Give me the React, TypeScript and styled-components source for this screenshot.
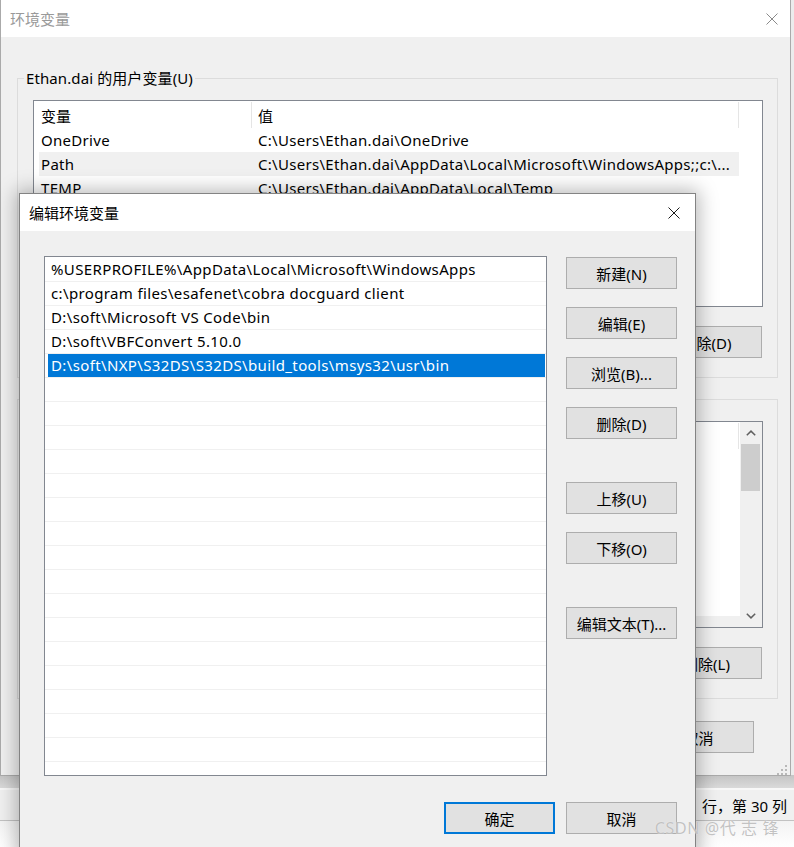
import React from "react";
import styled, { createGlobalStyle, css } from "styled-components";

const UI = `"Noto Sans", "Noto Sans CJK SC", sans-serif`;

const Global = createGlobalStyle`
  html, body { margin: 0; padding: 0; background: #ffffff; }
  body { font-family: ${UI}; font-size: 15px; color: #000; }
  * { box-sizing: border-box; }
`;

const Desktop = styled.div`
  position: relative;
  width: 794px;
  height: 847px;
  overflow: hidden;
  background: #e9e9e9;
`;

/* ---------- underlying editor application ---------- */
const EditorApp = styled.div`
  display: flex;
  flex-direction: column;
  height: 100%;
`;
const EditorCanvas = styled.div`
  height: 775px;
  background: #ececec;
`;
const EditorBand = styled.div`
  height: 15px;
  background: linear-gradient(#c4c4c4, #dadada);
  border-bottom: 2px solid #f8f8f8;
`;
const StatusBar = styled.div`
  height: 31px;
  background: #f0f0f0;
  border-bottom: 1px solid #c2c2c2;
  display: flex;
  align-items: center;
  justify-content: flex-end;
  padding-right: 7px;
  font-size: 15px;
  white-space: nowrap;
`;
const EditorBottom = styled.div`
  flex: 1;
  background: linear-gradient(#f3f3f3, #ffffff);
`;

/* ---------- windows ---------- */
const Window = styled.div<{ $x: number; $y: number; $w: number; $h: number; $active?: boolean }>`
  position: absolute;
  left: ${(p) => p.$x}px;
  top: ${(p) => p.$y}px;
  width: ${(p) => p.$w}px;
  height: ${(p) => p.$h}px;
  display: flex;
  flex-direction: column;
  background: #f0f0f0;
  border: 1px solid ${(p) => (p.$active ? "#838383" : "#aaaaaa")};
  ${(p) =>
    p.$active &&
    css`
      box-shadow: 0 0 18px 3px rgba(0, 0, 0, 0.28);
    `}
`;

const TitleBar = styled.div`
  height: 37px;
  flex: none;
  background: #ffffff;
  display: flex;
  align-items: center;
  padding-left: 9px;
`;

const TitleText = styled.div<{ $active?: boolean }>`
  font-size: 15px;
  color: ${(p) => (p.$active ? "#000000" : "#9a9a9a")};
  white-space: nowrap;
`;

const CloseButton = styled.div<{ $w: number }>`
  margin-left: auto;
  width: ${(p) => p.$w}px;
  height: 100%;
  display: flex;
  align-items: center;
  justify-content: center;
`;

const XIcon = ({ color }: { color: string }) => (
  <svg width="12" height="12" viewBox="0 0 12 12">
    <path d="M0.5 0.5 L11.5 11.5 M11.5 0.5 L0.5 11.5" stroke={color} strokeWidth="1" fill="none" />
  </svg>
);

/* ---------- background dialog (环境变量) ---------- */
const BgBody = styled.div`
  flex: 1;
  display: flex;
  flex-direction: column;
  padding: 41px 12px 0 16px;
  position: relative;
`;

const GroupBox = styled.div<{ $mt?: number }>`
  position: relative;
  margin-top: ${(p) => p.$mt ?? 0}px;
  border: 1px solid #dcdcdc;
  padding: 21px 14px 19px 15px;
  display: flex;
  flex-direction: column;
`;

const GroupLabel = styled.div`
  position: absolute;
  top: -11px;
  left: 6px;
  padding: 0 2px;
  line-height: 20px;
  background: #f0f0f0;
  white-space: nowrap;
  letter-spacing: 0.1px;
`;

const ListView = styled.div`
  height: 207px;
  border: 1px solid #828790;
  background: #ffffff;
  display: flex;
  overflow: hidden;
`;

const ListMain = styled.div`
  flex: 1;
  display: flex;
  flex-direction: column;
  min-width: 0;
`;

const ListHeader = styled.div`
  height: 27px;
  flex: none;
  display: grid;
  grid-template-columns: 218px 487px 1fr;
`;

const HeaderCell = styled.div<{ $pl: number; $divider?: boolean }>`
  padding-left: ${(p) => p.$pl}px;
  margin-top: 1px;
  display: flex;
  align-items: center;
  border-right: ${(p) => (p.$divider ? "1px solid #e5e5e5" : "none")};
  white-space: nowrap;
`;

const ListRows = styled.div`
  flex: 1;
  overflow: hidden;
`;

const VarRow = styled.div<{ $hl?: boolean }>`
  height: 24px;
  margin-left: 5px;
  width: 700px;
  display: grid;
  grid-template-columns: 213px 487px;
  align-items: center;
  background: ${(p) => (p.$hl ? "#f0f0f0" : "transparent")};
`;

const VarCell = styled.div<{ $pl: number }>`
  padding-left: ${(p) => p.$pl}px;
  white-space: nowrap;
  overflow: hidden;
  text-overflow: ellipsis;
  letter-spacing: 0.3px;
`;

const HScroll = styled.div`
  height: 11px;
  flex: none;
  background: #f0f0f0;
`;

const VScroll = styled.div`
  width: 22px;
  flex: none;
  background: #f0f0f0;
  display: flex;
  flex-direction: column;
`;

const ScrollArrow = styled.div`
  height: 22px;
  flex: none;
  display: flex;
  align-items: center;
  justify-content: center;
`;

const ScrollThumb = styled.div`
  height: 47px;
  margin: 0 2px 0 1px;
  background: #cdcdcd;
`;

const ScrollSpacer = styled.div`
  flex: 1;
`;

const Chevron = ({ up }: { up?: boolean }) => (
  <svg width="10" height="6" viewBox="0 0 10 6">
    <polyline
      points={up ? "0.8,5.3 5,1.1 9.2,5.3" : "0.8,0.7 5,4.9 9.2,0.7"}
      stroke="#606060"
      strokeWidth="1.5"
      fill="none"
    />
  </svg>
);

const ButtonRow = styled.div<{ $mt: number; $pr?: number; $gap?: number }>`
  display: flex;
  justify-content: flex-end;
  gap: ${(p) => p.$gap ?? 11}px;
  margin-top: ${(p) => p.$mt}px;
  padding-right: ${(p) => p.$pr ?? 0}px;
`;

const WinButton = styled.div<{ $default?: boolean; $mt?: number }>`
  width: 111px;
  height: 32px;
  flex: none;
  margin-top: ${(p) => p.$mt ?? 0}px;
  background: #e1e1e1;
  border: ${(p) => (p.$default ? "2px solid #0078d7" : "1px solid #adadad")};
  display: flex;
  align-items: center;
  justify-content: center;
  font-size: 15px;
  white-space: nowrap;
`;

const ResizeGrip = styled.div`
  position: absolute;
  right: 1px;
  bottom: 2px;
  width: 12px;
  height: 12px;
`;

/* ---------- foreground dialog (编辑环境变量) ---------- */
const DialogBody = styled.div`
  flex: 1;
  display: flex;
  flex-direction: column;
  padding: 25px 18px 0 24px;
`;

const DialogMain = styled.div`
  display: flex;
  gap: 19px;
`;

const PathList = styled.div`
  width: 503px;
  height: 520px;
  border: 1px solid #828790;
  background: #ffffff;
  padding-top: 1px;
  overflow: hidden;
`;

const PathItem = styled.div`
  height: 24px;
  border-bottom: 1px solid #f0f0f0;
  padding: 0 1px 0 3px;
  display: flex;
`;

const PathText = styled.div<{ $selected?: boolean }>`
  flex: 1;
  line-height: 23px;
  padding-left: 3px;
  white-space: nowrap;
  overflow: hidden;
  letter-spacing: 0.37px;
  background: ${(p) => (p.$selected ? "#0078d7" : "transparent")};
  color: ${(p) => (p.$selected ? "#ffffff" : "#000000")};
`;

const ButtonColumn = styled.div`
  width: 111px;
  display: flex;
  flex-direction: column;
  padding-top: 1px;
`;

const Watermark = styled.div`
  position: absolute;
  right: 15px;
  bottom: 8px;
  font-family: "Noto Sans", "Noto Sans CJK SC", sans-serif;
  font-size: 16px;
  letter-spacing: 0.6px;
  color: rgba(175, 175, 175, 0.75);
  text-shadow: 0 0 1px rgba(255, 255, 255, 0.9);
  white-space: nowrap;
`;

const userVars: [string, string][] = [
  ["OneDrive", "C:\\Users\\Ethan.dai\\OneDrive"],
  ["Path", "C:\\Users\\Ethan.dai\\AppData\\Local\\Microsoft\\WindowsApps;;c:\\..."],
  ["TEMP", "C:\\Users\\Ethan.dai\\AppData\\Local\\Temp"],
  ["TMP", "C:\\Users\\Ethan.dai\\AppData\\Local\\Temp"],
];

const sysVars: [string, string][] = [
  ["ComSpec", "C:\\WINDOWS\\system32\\cmd.exe"],
  ["DriverData", "C:\\Windows\\System32\\Drivers\\DriverData"],
  ["NUMBER_OF_PROCESSORS", "8"],
  ["OS", "Windows_NT"],
  ["PATHEXT", ".COM;.EXE;.BAT;.CMD;.VBS;.VBE;.JS;.JSE;.WSF"],
  ["PROCESSOR_ARCHITECTURE", "AMD64"],
  ["PROCESSOR_LEVEL", "6"],
];

const pathItems: string[] = [
  "%USERPROFILE%\\AppData\\Local\\Microsoft\\WindowsApps",
  "c:\\program files\\esafenet\\cobra docguard client",
  "D:\\soft\\Microsoft VS Code\\bin",
  "D:\\soft\\VBFConvert 5.10.0",
  "D:\\soft\\NXP\\S32DS\\S32DS\\build_tools\\msys32\\usr\\bin",
];

const SELECTED = 4;
const TOTAL_ROWS = 22;

export default function App() {
  const rows = Array.from({ length: TOTAL_ROWS }, (_, i) => pathItems[i] ?? "");

  return (
    <>
      <Global />
      <Desktop>
        <EditorApp>
          <EditorCanvas />
          <EditorBand />
          <StatusBar>第 1 行，第 30 列</StatusBar>
          <EditorBottom />
        </EditorApp>

        <Window $x={0} $y={-1} $w={791} $h={777}>
          <TitleBar>
            <TitleText>环境变量</TitleText>
            <CloseButton $w={36}>
              <XIcon color="#8a8a8a" />
            </CloseButton>
          </TitleBar>
          <BgBody>
            <GroupBox>
              <GroupLabel>Ethan.dai 的用户变量(U)</GroupLabel>
              <ListView>
                <ListMain>
                  <ListHeader>
                    <HeaderCell $pl={7} $divider>变量</HeaderCell>
                    <HeaderCell $pl={6} $divider>值</HeaderCell>
                    <HeaderCell $pl={0} />
                  </ListHeader>
                  <ListRows>
                    {userVars.map(([k, v]) => (
                      <VarRow key={k} $hl={k === "Path"}>
                        <VarCell $pl={2}>{k}</VarCell>
                        <VarCell $pl={6}>{v}</VarCell>
                      </VarRow>
                    ))}
                  </ListRows>
                </ListMain>
              </ListView>
              <ButtonRow $mt={19} $pr={1}>
                <WinButton>新建(N)...</WinButton>
                <WinButton>编辑(E)...</WinButton>
                <WinButton>删除(D)</WinButton>
              </ButtonRow>
            </GroupBox>

            <GroupBox $mt={21}>
              <GroupLabel>系统变量(S)</GroupLabel>
              <ListView>
                <ListMain>
                  <ListHeader>
                    <HeaderCell $pl={7} $divider>变量</HeaderCell>
                    <HeaderCell $pl={6} $divider>值</HeaderCell>
                  </ListHeader>
                  <ListRows>
                    {sysVars.map(([k, v]) => (
                      <VarRow key={k}>
                        <VarCell $pl={2}>{k}</VarCell>
                        <VarCell $pl={6}>{v}</VarCell>
                      </VarRow>
                    ))}
                  </ListRows>
                  <HScroll />
                </ListMain>
                <VScroll>
                  <ScrollArrow>
                    <Chevron up />
                  </ScrollArrow>
                  <ScrollThumb />
                  <ScrollSpacer />
                  <ScrollArrow>
                    <Chevron />
                  </ScrollArrow>
                </VScroll>
              </ListView>
              <ButtonRow $mt={19} $pr={1}>
                <WinButton>新建(W)...</WinButton>
                <WinButton>编辑(I)...</WinButton>
                <WinButton>删除(L)</WinButton>
              </ButtonRow>
            </GroupBox>

            <ButtonRow $mt={22} $pr={24}>
              <WinButton>确定</WinButton>
              <WinButton>取消</WinButton>
            </ButtonRow>

            <ResizeGrip>
              <svg width="12" height="12" viewBox="0 0 12 12">
                {[
                  [8, 0],
                  [4, 4],
                  [8, 4],
                  [0, 8],
                  [4, 8],
                  [8, 8],
                ].map(([x, y]) => (
                  <rect key={`${x}-${y}`} x={x} y={y} width="2" height="2" fill="#b8b8b8" />
                ))}
              </svg>
            </ResizeGrip>
          </BgBody>
        </Window>

        <Window $x={19} $y={193} $w={677} $h={670} $active>
          <TitleBar>
            <TitleText $active>编辑环境变量</TitleText>
            <CloseButton $w={42}>
              <XIcon color="#1a1a1a" />
            </CloseButton>
          </TitleBar>
          <DialogBody>
            <DialogMain>
              <PathList>
                {rows.map((t, i) => (
                  <PathItem key={i}>
                    <PathText $selected={i === SELECTED}>{t}</PathText>
                  </PathItem>
                ))}
              </PathList>
              <ButtonColumn>
                <WinButton>新建(N)</WinButton>
                <WinButton $mt={18}>编辑(E)</WinButton>
                <WinButton $mt={18}>浏览(B)...</WinButton>
                <WinButton $mt={18}>删除(D)</WinButton>
                <WinButton $mt={43}>上移(U)</WinButton>
                <WinButton $mt={18}>下移(O)</WinButton>
                <WinButton $mt={43}>编辑文本(T)...</WinButton>
              </ButtonColumn>
            </DialogMain>
            <ButtonRow $mt={26}>
              <WinButton $default>确定</WinButton>
              <WinButton>取消</WinButton>
            </ButtonRow>
          </DialogBody>
        </Window>

        <Watermark>CSDN @代 志 锋</Watermark>
      </Desktop>
    </>
  );
}
